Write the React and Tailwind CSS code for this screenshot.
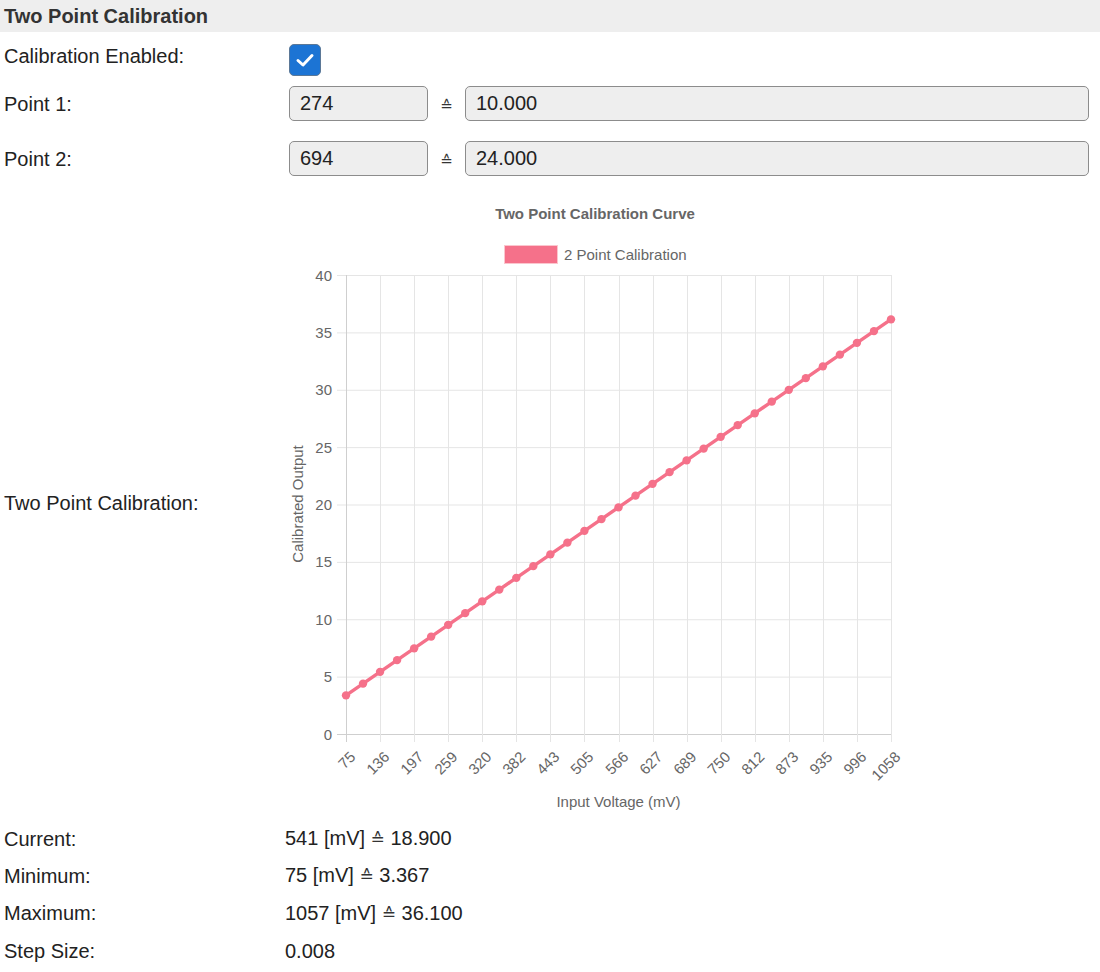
import React from 'react';

const LINE = '#f5718a';

// chart geometry (px inside the svg)
const W = 620;
const H = 634;
const L = 61;
const R = 606;
const T = 89;
const B = 548;

const xLabels = ['75', '136', '197', '259', '320', '382', '443', '505', '566', '627', '689', '750', '812', '873', '935', '996', '1058'];

const Corresponds = ({ className = '' }) => (
  <span className={`inline-block align-baseline font-['DejaVu_Sans',sans-serif] text-[15px] text-[#333] ${className}`}>≙</span>
);

const CalibrationChart = () => {
  const yToPx = (v) => B - (v / 40) * (B - T);
  const tickStep = (R - L) / (xLabels.length - 1);

  // 33 samples between 75 and 1058 mV
  const points = Array.from({ length: 33 }, (_, i) => {
    const mv = 75 + (i * 983) / 32;
    const val = (mv - 274) / 30 + 10;
    return { x: L + (i * (R - L)) / 32, y: yToPx(val) };
  });
  const linePath = points.map((p, i) => `${i === 0 ? 'M' : 'L'}${p.x.toFixed(2)},${p.y.toFixed(2)}`).join(' ');

  return (
    <svg width={W} height={H} className="block" style={{ fontFamily: '"Liberation Sans", Arial, sans-serif' }}>
      <text x={310} y={27} textAnchor="middle" dominantBaseline="central" fontSize="15" fontWeight="bold" fill="#666">
        Two Point Calibration Curve
      </text>

      {/* legend */}
      <rect x={219.5} y={59.5} width={53} height={18} fill={LINE} stroke="#fbc6ce" strokeWidth="1" />
      <text x={279} y={68} dominantBaseline="central" fontSize="15" fill="#666">2 Point Calibration</text>

      {/* horizontal grid + y ticks */}
      {[0, 5, 10, 15, 20, 25, 30, 35, 40].map((v) => {
        const y = yToPx(v);
        return (
          <g key={v}>
            <line x1={L - 9} x2={R} y1={y + 0.5} y2={y + 0.5} stroke={v === 0 ? '#cfcfcf' : '#e5e5e5'} strokeWidth="1" />
            <text x={47} y={y} textAnchor="end" dominantBaseline="central" fontSize="15" fill="#666">{v}</text>
          </g>
        );
      })}

      {/* vertical grid + x ticks */}
      {xLabels.map((lab, i) => {
        const x = Math.round(L + i * tickStep) + 0.5;
        return (
          <g key={lab}>
            <line x1={x} x2={x} y1={T} y2={B + 8} stroke={i === 0 ? '#cfcfcf' : '#e5e5e5'} strokeWidth="1" />
            <text
              x={x + 6}
              y={568}
              textAnchor="end"
              dominantBaseline="central"
              fontSize="15"
              fill="#666"
              transform={`rotate(-45 ${x + 6} 568)`}
            >
              {lab}
            </text>
          </g>
        );
      })}

      <text x={12} y={318} textAnchor="middle" dominantBaseline="central" fontSize="15" fill="#666" transform="rotate(-90 12 318)">
        Calibrated Output
      </text>
      <text x={333.5} y={615} textAnchor="middle" dominantBaseline="central" fontSize="15" fill="#666">
        Input Voltage (mV)
      </text>

      <path d={linePath} fill="none" stroke={LINE} strokeWidth="3.5" strokeLinejoin="round" />
      {points.map((p, i) => (
        <circle key={i} cx={p.x} cy={p.y} r="4.2" fill={LINE} />
      ))}
    </svg>
  );
};

const ReadOnlyInput = ({ value, className }) => (
  <input
    readOnly
    value={value}
    className={`h-[35px] rounded-[5px] border border-[#8c8c8c] bg-[#eeeeee] pl-[10px] text-[20px] text-[#222] outline-none ${className}`}
  />
);

const InfoRow = ({ label, children }) => (
  <div className="grid h-[37.33px] grid-cols-[285px_1fr] items-center">
    <div className="pl-1">{label}</div>
    <div>{children}</div>
  </div>
);

export default function App() {
  return (
    <div className="w-[1100px] bg-white font-['Liberation_Sans',Arial,sans-serif] text-[20px] leading-[24px] text-[#222]">
      <div className="h-[32px] bg-[#eeeeee] pl-1 font-bold leading-[32px] text-[#333]">Two Point Calibration</div>

      <div className="grid h-[44px] grid-cols-[285px_1fr] items-start">
        <div className="pl-1 pt-[12px]">Calibration Enabled:</div>
        <div className="ml-1 mt-[12px] flex h-[32px] w-[32px] items-center justify-center rounded-[5px] border border-[#5b7897] bg-[#1c74d4]">
          <svg width="24" height="24" viewBox="0 0 24 24">
            <path d="M5 12.5 L10 17 L19 7.5" fill="none" stroke="#fff" strokeWidth="3" strokeLinecap="round" strokeLinejoin="round" />
          </svg>
        </div>
      </div>

      {[['Point 1:', '274', '10.000'], ['Point 2:', '694', '24.000']].map(([label, mv, out]) => (
        <div key={label} className="grid h-[55px] grid-cols-[285px_1fr] items-center pr-[11px]">
          <div className="pl-1">{label}</div>
          <div className="flex items-center">
            <ReadOnlyInput value={mv} className="ml-1 w-[139px]" />
            <span className="w-[37px] pt-[3px] text-center">
              <Corresponds />
            </span>
            <ReadOnlyInput value={out} className="min-w-0 flex-1" />
          </div>
        </div>
      ))}

      <div className="grid grid-cols-[285px_1fr] items-center">
        <div className="pl-1">Two Point Calibration:</div>
        <CalibrationChart />
      </div>

      <InfoRow label="Current:">541 [mV] <Corresponds className="text-[17px]" /> 18.900</InfoRow>
      <InfoRow label="Minimum:">75 [mV] <Corresponds className="text-[17px]" /> 3.367</InfoRow>
      <InfoRow label="Maximum:">1057 [mV] <Corresponds className="text-[17px]" /> 36.100</InfoRow>
      <InfoRow label="Step Size:">0.008</InfoRow>
    </div>
  );
}
